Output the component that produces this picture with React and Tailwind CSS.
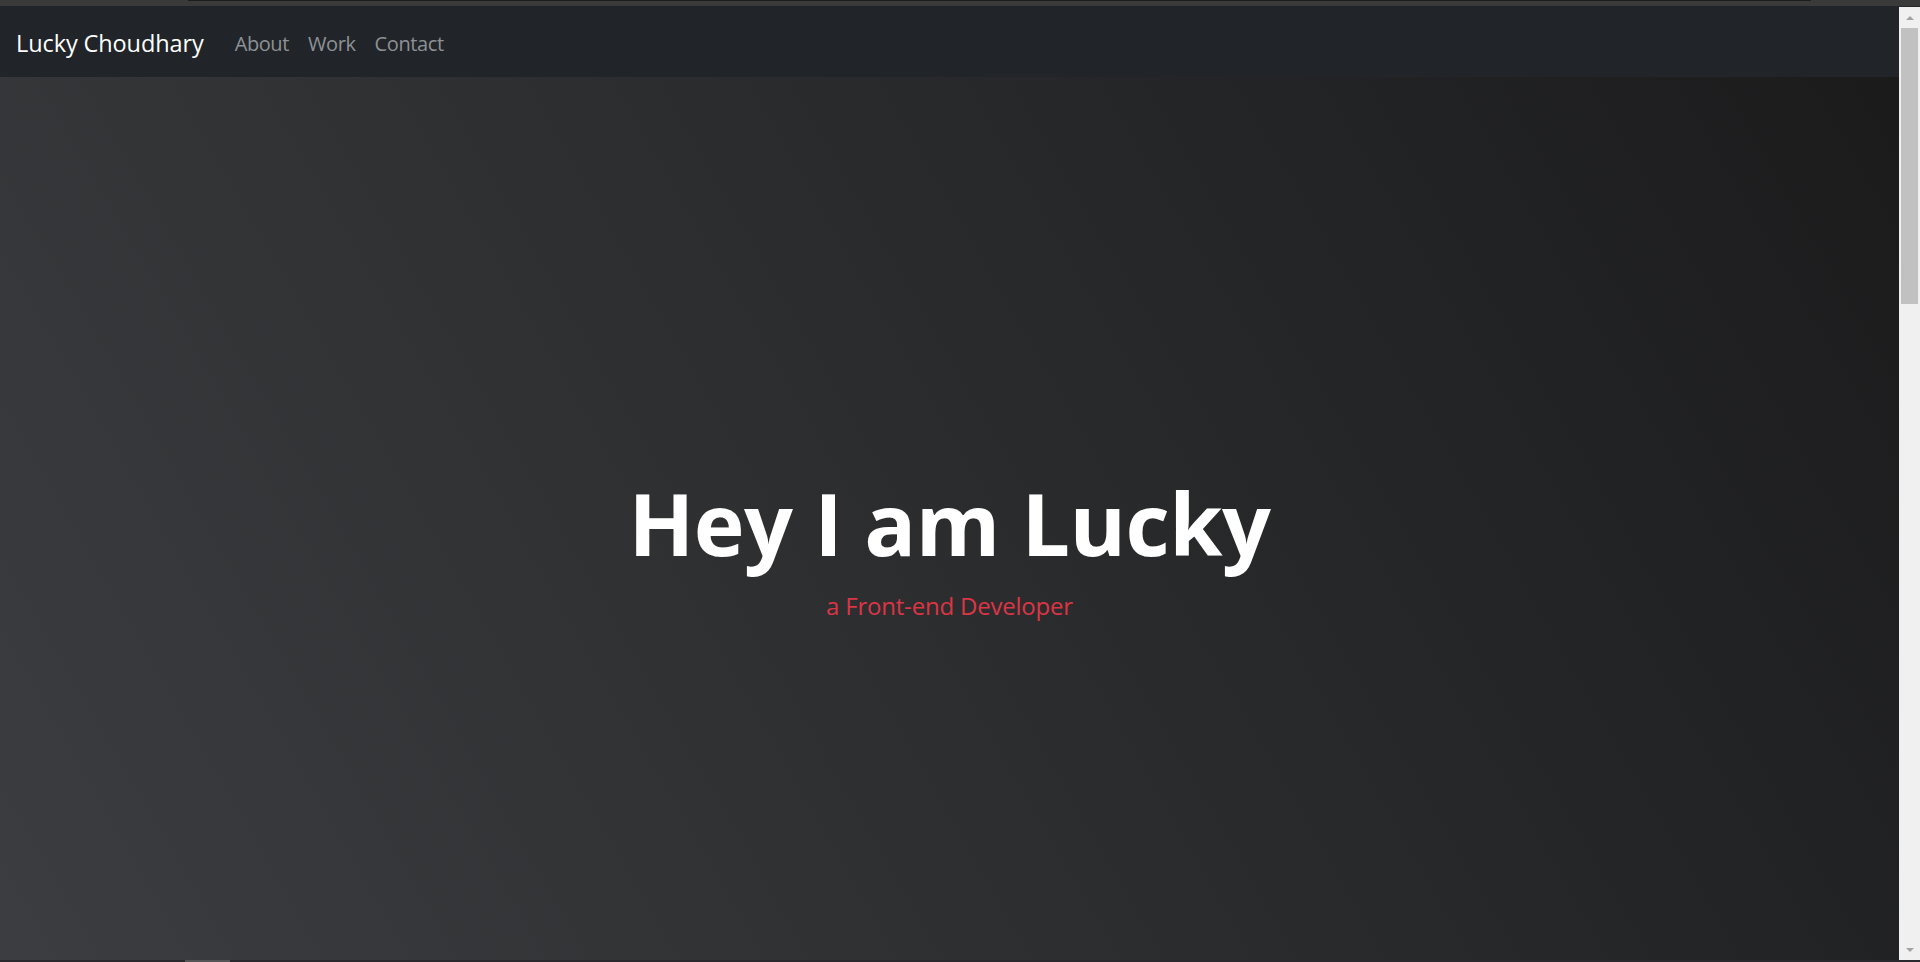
const font = { fontFamily: '"Open Sans", "Noto Sans", sans-serif' };

const Navbar = () => {
    return (
        <nav className="h-[71px] bg-[#212529] flex items-center pl-[16px] pt-[5px]">
            <a className="text-white text-[23.5px] leading-none tracking-[-0.1px] mr-[31px]" href="#">
                Lucky Choudhary
            </a>
            <div className="flex items-center gap-[19px] text-[20px] text-[#8e9195] tracking-[-0.4px]">
                <a href="#">About</a>
                <a href="#">Work</a>
                <a href="#">Contact</a>
            </div>
        </nav>
    );
};

const Scrollbar = () => {
    return (
        <div className="w-[21px] bg-[#f0f0f0] flex flex-col items-center mt-[1px]">
            <div className="h-[21px] w-full flex items-center justify-center">
                <div className="w-0 h-0 border-l-[4px] border-r-[4px] border-b-[4px] border-l-transparent border-r-transparent border-b-[#a3a3a3]" />
            </div>
            <div className="w-[17px] h-[276px] bg-[#c1c1c1]" />
            <div className="flex-1" />
            <div className="h-[21px] w-full flex items-center justify-center">
                <div className="w-0 h-0 border-l-[4px] border-r-[4px] border-t-[4px] border-l-transparent border-r-transparent border-t-[#a3a3a3]" />
            </div>
        </div>
    );
};

const App = () => {
    return (
        <div className="w-[1920px] h-[962px] flex flex-col overflow-hidden bg-[#2a2a2e]" style={font}>
            {/* window strip */}
            <div className="h-[6px] bg-[#3a3a3a] flex">
                <div className="ml-[188px] w-[1623px] h-[1px] bg-[#1c1c1c]" />
            </div>

            <div className="flex-1 flex min-h-0">
                <div className="flex-1 flex flex-col">
                    <Navbar />
                    <section className="flex-1 flex flex-col items-center justify-center pt-[58px] bg-[linear-gradient(60deg,#3b3d40_0%,#2b2c2e_50%,#1b1b1c_100%)]">
                        <h1 className="text-white font-bold text-[86px] leading-[1.2] tracking-[-0.5px]">
                            Hey I am Lucky
                        </h1>
                        <p className="text-[#dc3545] text-[24px] leading-[1.5] tracking-[-0.2px] mt-[13px]">
                            a Front-end Developer
                        </p>
                    </section>
                </div>
                <Scrollbar />
            </div>

            {/* bottom strip */}
            <div className="h-[2px] bg-[#2a2a2e] flex">
                <div className="ml-[185px] w-[45px] bg-[#555558]" />
            </div>
        </div>
    );
};

export default App;
